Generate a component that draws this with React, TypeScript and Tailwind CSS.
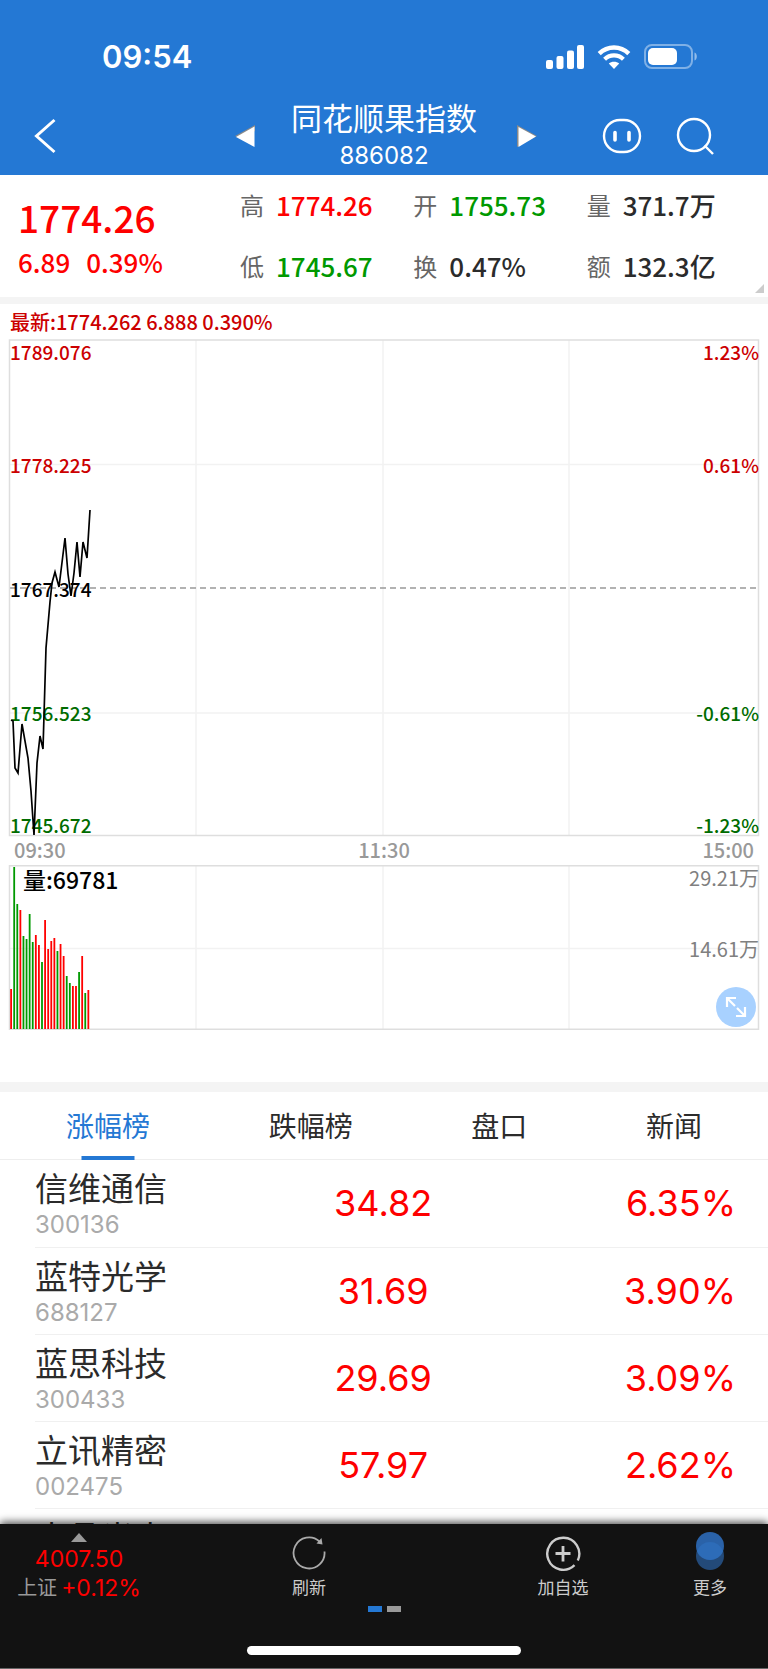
import { useState } from "react";

type Tone = "up" | "down" | "flat";

const toneClass: Record<Tone, string> = {
  up: "text-[#fe0000]",
  down: "text-[#009900]",
  flat: "text-[#2b2b2b]",
};

const stats: { label: string; value: string; tone: Tone }[] = [
  { label: "高", value: "1774.26", tone: "up" },
  { label: "开", value: "1755.73", tone: "down" },
  { label: "量", value: "371.7万", tone: "flat" },
  { label: "低", value: "1745.67", tone: "down" },
  { label: "换", value: "0.47%", tone: "flat" },
  { label: "额", value: "132.3亿", tone: "flat" },
];

const tabs = ["涨幅榜", "跌幅榜", "盘口", "新闻"];

const stocks = [
  { name: "信维通信", code: "300136", price: "34.82", change: "6.35%" },
  { name: "蓝特光学", code: "688127", price: "31.69", change: "3.90%" },
  { name: "蓝思科技", code: "300433", price: "29.69", change: "3.09%" },
  { name: "立讯精密", code: "002475", price: "57.97", change: "2.62%" },
  { name: "水晶光电", code: "002273", price: "24.86", change: "2.31%" },
];

const priceLabels = [
  { y: 21, price: "1789.076", pct: "1.23%", fill: "#cc0000" },
  { y: 134, price: "1778.225", pct: "0.61%", fill: "#cc0000" },
  { y: 258, price: "1767.374", pct: "", fill: "#000000" },
  { y: 382, price: "1756.523", pct: "-0.61%", fill: "#006c00" },
  { y: 494, price: "1745.672", pct: "-1.23%", fill: "#006c00" },
];

const pricePoints =
  "3,381 5,382 7,429 10,434 14,385 20,419 23,452 26,496 29,424 32,397 35,410 38,309 42,263 44,244 47,233 51,248 57,199 60,235 63,257 66,234 69,203 72,238 75,203 79,219 82,171";

// [height, rising]
const volumes: [number, boolean][] = [
  [40, true], [162, false], [125, false], [119, true], [93, false], [90, false],
  [115, false], [87, false], [94, true], [84, true], [67, false], [109, true],
  [80, true], [88, true], [91, true], [78, false], [85, true], [73, true],
  [53, false], [46, false], [43, true], [43, true], [57, false], [73, true],
  [36, false], [39, true],
];

const gridX = [188, 375, 561];

function SignalIcon() {
  return (
    <svg width="38" height="24" viewBox="0 0 38 24" fill="#fff">
      <rect x="0" y="15" width="7" height="9" rx="2" />
      <rect x="10.5" y="11" width="7" height="13" rx="2" />
      <rect x="21" y="5.5" width="7" height="18.5" rx="2" />
      <rect x="31" y="0" width="7" height="24" rx="2" />
    </svg>
  );
}

function WifiIcon() {
  return (
    <svg width="34" height="24" viewBox="0 0 34 24" fill="none" stroke="#fff">
      <path d="M2.2 8.6C10.5 0.4 23.5 0.4 31.8 8.6" strokeWidth="4.4" />
      <path d="M7.6 14.2C13 9 21 9 26.4 14.2" strokeWidth="4.2" />
      <path d="M17 24L11.8 18.6C14.6 16 19.4 16 22.2 18.6Z" fill="#fff" stroke="none" />
    </svg>
  );
}

function BatteryIcon() {
  return (
    <svg width="54" height="26" viewBox="0 0 54 26">
      <rect x="1" y="1" width="47" height="23" rx="7" fill="none" stroke="#fff" strokeOpacity="0.42" strokeWidth="2" />
      <rect x="4" y="4" width="29" height="17" rx="5" fill="#fff" />
      <path d="M50.5 8.5C53.6 9.6 53.6 15.4 50.5 16.5Z" fill="#fff" fillOpacity="0.5" />
    </svg>
  );
}

function PriceChart() {
  return (
    <svg
      viewBox="0 0 752 498"
      className="block w-full overflow-visible font-['Noto_Sans_CJK_SC',sans-serif] text-[19px] font-medium"
    >
      <g stroke="#f2f2f2" strokeWidth="1.5">
        {gridX.map((x) => (
          <line key={x} x1={x} y1="1" x2={x} y2="496" />
        ))}
        <line x1="2" y1="125.5" x2="750" y2="125.5" />
        <line x1="2" y1="374" x2="750" y2="374" />
      </g>
      <line x1="2" y1="249" x2="750" y2="249" stroke="#999" strokeWidth="1.5" strokeDasharray="6 4" />
      <rect x="1.5" y="1" width="749" height="495.5" fill="none" stroke="#dedede" strokeWidth="1.5" />
      {priceLabels.map((l) => (
        <g key={l.price} fill={l.fill}>
          <text x="2" y={l.y}>{l.price}</text>
          <text x="751" y={l.y} textAnchor="end">{l.pct}</text>
        </g>
      ))}
      <polyline points={pricePoints} fill="none" stroke="#000" strokeWidth="1.7" />
    </svg>
  );
}

function VolumeChart() {
  return (
    <svg
      viewBox="0 0 752 166"
      className="block w-full overflow-visible font-['Noto_Sans_CJK_SC',sans-serif] text-[20px]"
    >
      <g stroke="#f2f2f2" strokeWidth="1.5">
        {gridX.map((x) => (
          <line key={x} x1={x} y1="1" x2={x} y2="164" />
        ))}
        <line x1="2" y1="83.5" x2="750" y2="83.5" />
      </g>
      <rect x="1.5" y="0.75" width="749" height="163.5" fill="none" stroke="#dedede" strokeWidth="1.5" />
      {volumes.map(([h, rising], i) => (
        <rect
          key={i}
          x={2.2 + i * 3.09}
          y={164 - h}
          width="1.8"
          height={h}
          fill={rising ? "#ff0000" : "#009900"}
        />
      ))}
      <text x="15" y="24" fontSize="23" fontWeight="500" fill="#000">量:69781</text>
      <g fill="#808080" textAnchor="end">
        <text x="751" y="21">29.21万</text>
        <text x="751" y="92">14.61万</text>
      </g>
    </svg>
  );
}

export default function App() {
  const [active, setActive] = useState(0);

  return (
    <div className="flex h-screen flex-col overflow-hidden bg-white font-['Inter','Noto_Sans_CJK_SC',sans-serif] text-[#2b2b2b]">
      <header className="shrink-0 bg-[#2478d4] text-white">
        <div className="flex h-24 items-center justify-between pt-[18px] pr-[70px] pl-[102px]">
          <span className="text-[31px] font-semibold">09:54</span>
          <div className="flex items-center gap-[13px]">
            <SignalIcon />
            <WifiIcon />
            <BatteryIcon />
          </div>
        </div>
        <div className="grid h-[79px] grid-cols-[1fr_auto_1fr] items-center">
          <button aria-label="返回" className="pl-[34px]">
            <svg width="22" height="36" viewBox="0 0 22 36" fill="none" stroke="#fff" strokeWidth="3">
              <path d="M20.5 2L2.5 18L20.5 34" />
            </svg>
          </button>
          <div className="flex items-center pl-1">
            <button aria-label="上一个">
              <svg width="20" height="24" viewBox="0 0 20 24">
                <path d="M0 12L20 1V7L4 14Z" fill="#8a8a8a" />
                <path d="M1 13L19.5 2.5V23Z" fill="#fff" />
              </svg>
            </button>
            <div className="mr-10 ml-9 flex flex-col items-center pt-0.5">
              <h1 className="text-[31px] leading-[38px] font-normal">同花顺果指数</h1>
              <span className="text-2xl leading-9">886082</span>
            </div>
            <button aria-label="下一个">
              <svg width="20" height="24" viewBox="0 0 20 24">
                <path d="M0 1L20 12L0 23Z" fill="#8a8a8a" />
                <path d="M1.5 3L19 12.5L1.5 23Z" fill="#fff" />
              </svg>
            </button>
          </div>
          <div className="flex items-center justify-end gap-[34px] pr-[54px]">
            <button aria-label="助手">
              <svg width="40" height="36" viewBox="0 0 40 36" fill="none" stroke="#fff">
                <rect x="2" y="2" width="36" height="32" rx="16" strokeWidth="2.4" />
                <path d="M13 14.5V22M27 14.5V22" strokeWidth="3.6" strokeLinecap="round" />
              </svg>
            </button>
            <button aria-label="搜索">
              <svg width="38" height="38" viewBox="0 0 38 38" fill="none" stroke="#fff" strokeWidth="2.4">
                <circle cx="18" cy="18" r="16" />
                <path d="M28.5 28.5L37 37" />
              </svg>
            </button>
          </div>
        </div>
      </header>

      <section className="relative flex h-[122px] shrink-0 font-['Noto_Sans_CJK_SC',sans-serif] font-medium">
        <div className="w-60 shrink-0 pt-4 pl-[18px] text-[#fe0000]">
          <div className="text-[37px] leading-[53px]">1774.26</div>
          <div className="flex gap-4 text-[26px] leading-9">
            <span>6.89</span>
            <span>0.39%</span>
          </div>
        </div>
        <dl className="grid flex-1 grid-cols-3 content-start pr-2">
          {stats.map((s) => (
            <div key={s.label} className="flex h-[61px] items-center gap-3 pb-0.5">
              <dt className="text-2xl font-normal text-[#666]">{s.label}</dt>
              <dd className={`text-[26px] ${toneClass[s.tone]}`}>{s.value}</dd>
            </div>
          ))}
        </dl>
        <svg className="absolute right-1 bottom-1 size-[9px]" viewBox="0 0 9 9" fill="#ccc">
          <path d="M9 0V9H0Z" />
        </svg>
      </section>

      <section className="shrink-0 border-t-[7px] border-[#f4f4f4] px-2 pb-[51px]">
        <p className="pt-px pl-0.5 font-['Noto_Sans_CJK_SC',sans-serif] text-[20px] leading-[34px] font-medium text-[#cc0000]">
          最新:1774.262 6.888 0.390%
        </p>
        <PriceChart />
        <div className="flex justify-between px-1.5 pb-0.5 font-['Noto_Sans_CJK_SC',sans-serif] text-[20px] leading-[26px] font-medium text-[#999]">
          <span>09:30</span>
          <span>11:30</span>
          <span>15:00</span>
        </div>
        <div className="relative">
          <VolumeChart />
          <button
            aria-label="全屏"
            className="absolute right-1 bottom-1 flex size-10 items-center justify-center rounded-full bg-[#a8d1ff]"
          >
            <svg width="22" height="22" viewBox="0 0 22 22" fill="none" stroke="#fff" strokeWidth="2.2">
              <path d="M2 11V2H11M2 2L10 10M20 11V20H11M20 20L12 12" />
            </svg>
          </button>
        </div>
      </section>

      <nav className="flex h-[78px] shrink-0 justify-between border-t-10 border-b border-t-[#f4f4f4] border-b-[#eee] px-[66px] text-[28px]">
        {tabs.map((t, i) => (
          <button
            key={t}
            onClick={() => setActive(i)}
            className={`relative pt-0.5 ${i === active ? "text-[#2478d4]" : "text-[#2b2b2b]"}`}
          >
            {t}
            {i === active && (
              <span className="absolute -bottom-px left-1/2 h-1 w-[53px] -translate-x-1/2 bg-[#2478d4]" />
            )}
          </button>
        ))}
      </nav>

      <main className="min-h-0 flex-1 overflow-hidden pl-[35px]">
        <table className="w-full table-fixed">
          <tbody>
            {stocks.map((s) => (
              <tr key={s.code} className="h-[87px] border-b border-[#f0f0f0]">
                <td className="w-[32%] p-0 pt-1">
                  <div className="text-[33px] leading-10">{s.name}</div>
                  <div className="text-2xl leading-8 text-[#aaa]">{s.code}</div>
                </td>
                <td className="w-[31%] p-0 text-center text-4xl text-[#fe0000]">{s.price}</td>
                <td className="p-0 pr-8 text-right text-4xl text-[#fe0000]">{s.change}</td>
              </tr>
            ))}
          </tbody>
        </table>
      </main>

      <footer className="relative shrink-0 border-b border-[#666] bg-[#121212] text-[#ccc] shadow-[0_-2px_8px_rgba(0,0,0,0.7)]">
        <div className="grid h-[82px] grid-cols-[158fr_302fr_206fr_88fr_14fr] text-[17px] leading-6">
          <button className="flex flex-col items-center pt-[9px]">
            <svg width="16" height="9" viewBox="0 0 16 9" fill="#999">
              <path d="M8 0L16 9H0Z" />
            </svg>
            <span className="mt-[3px] text-[23px] leading-[29px] text-[#fe0000]">4007.50</span>
            <span className="flex items-center gap-1 leading-[29px]">
              <span className="text-[20px] text-[#999]">上证</span>
              <span className="text-[23px] text-[#fe0000]">+0.12%</span>
            </span>
          </button>
          <button className="flex flex-col items-center justify-between pt-3 pb-1.5">
            <svg width="34" height="34" viewBox="0 0 34 34" fill="none" stroke="#aaa" strokeWidth="1.8">
              <path d="M32.5 15.5A15.5 15.5 0 1 1 27.5 5.5" />
              <path d="M29.5 2L30.5 8.5L24.5 7.5Z" fill="#aaa" stroke="none" />
            </svg>
            刷新
          </button>
          <button className="flex flex-col items-center justify-between pt-3 pb-1.5">
            <svg width="36" height="36" viewBox="0 0 36 36" fill="none" stroke="#ccc" strokeWidth="2.4">
              <path d="M32.8 24.5A16 16 0 1 0 29.5 29.2" />
              <path d="M18 10V25.5M10.5 17.5H25.5" strokeWidth="2.8" />
            </svg>
            加自选
          </button>
          <button className="flex flex-col items-center justify-between pt-2 pb-1.5">
            <svg width="28" height="38" viewBox="0 0 28 38">
              <circle cx="14" cy="24" r="14" fill="#234a79" />
              <circle cx="14" cy="14" r="14" fill="#2a62a8" />
              <path d="M0.9 19A14 14 0 0 1 27.1 19A14 14 0 0 1 0.9 19Z" fill="#2d6cb8" />
            </svg>
            更多
          </button>
        </div>
        <div className="flex justify-center gap-[5px]">
          <span className="h-1.5 w-3.5 bg-[#2478d4]" />
          <span className="h-1.5 w-3.5 bg-[#999]" />
        </div>
        <div className="flex justify-center pt-[34px] pb-[13px]">
          <span className="h-[9px] w-[274px] rounded-full bg-white" />
        </div>
      </footer>
    </div>
  );
}
